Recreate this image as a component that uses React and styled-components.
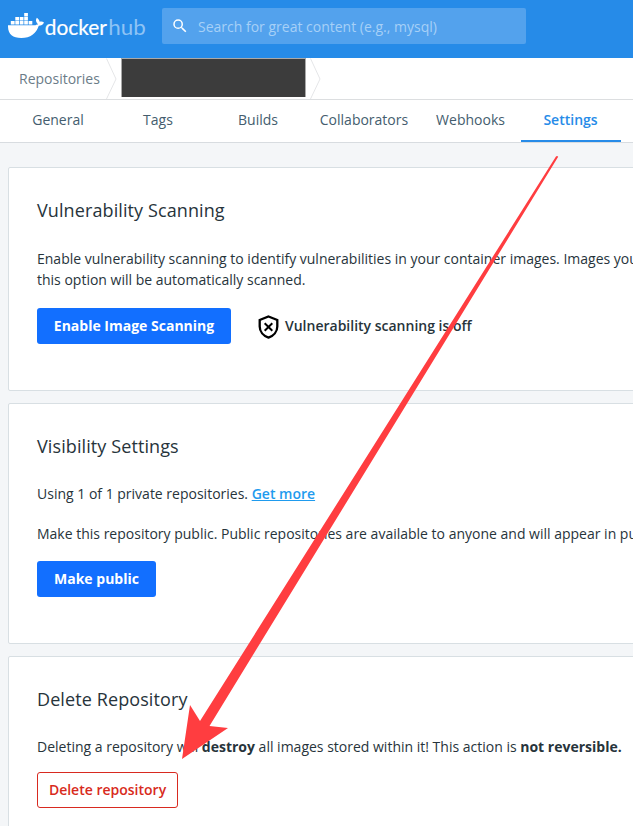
import styled, { createGlobalStyle } from 'styled-components';

const GlobalStyle = createGlobalStyle`
  * {
    box-sizing: border-box;
  }
  body {
    margin: 0;
    background-color: #f4f6f8;
    color: #27343b;
    font-family: 'Open Sans', 'Noto Sans', sans-serif;
    font-size: 14px;
    overflow: hidden;
  }
`;

const Page = styled.div`
  position: relative;
  width: 633px;
  height: 826px;
  overflow: hidden;
`;

const Header = styled.header`
  display: flex;
  align-items: flex-start;
  height: 58px;
  padding: 8px 0 0 8px;
  background-color: #268be8;
`;

const Logo = styled.svg`
  width: 142px;
  height: 34px;
  margin-right: 12px;
`;

const SearchBox = styled.div`
  display: flex;
  align-items: center;
  width: 364px;
  height: 36px;
  padding-left: 9px;
  border-radius: 2px;
  background-color: #53a2ed;
  color: #a6d0f7;
  svg {
    margin-right: 9px;
  }
`;

const Breadcrumb = styled.nav`
  display: flex;
  height: 42px;
  padding-left: 19px;
  border-bottom: 1px solid #dcdee0;
  background-color: white;
`;

const Crumb = styled.span`
  width: 87px;
  line-height: 42px;
  color: #6b7c88;
`;

const Chevron = styled.svg`
  width: 11px;
  height: 41px;
`;

// 이름이 가려진 저장소
const Redacted = styled.div`
  width: 185px;
  height: 39px;
  margin: 0 4px;
  border: 1px solid #a9a9a9;
  border-bottom: 0;
  background-color: #3c3c3c;
`;

const Tabs = styled.nav`
  display: flex;
  height: 43px;
  padding-left: 8px;
  border-bottom: 1px solid #d8dce0;
  background-color: white;
`;

const Tab = styled.a`
  width: ${(props) => props.$width || 100}px;
  padding-right: ${(props) => (props.$active ? 1 : 0)}px;
  line-height: 40px;
  text-align: center;
  color: ${(props) => (props.$active ? '#268be8' : '#445d6e')};
  font-weight: ${(props) => (props.$active ? 600 : 400)};
  border-bottom: 2px solid ${(props) => (props.$active ? '#268be8' : 'transparent')};
`;

const Main = styled.main`
  display: flex;
  flex-direction: column;
  gap: 12px;
  padding: 24px 0 0 8px;
`;

const Card = styled.section`
  flex-shrink: 0;
  width: 700px;
  height: ${(props) => props.$height}px;
  padding: 28px;
  border: 1px solid #d8dfe3;
  border-radius: 2px;
  background-color: white;
`;

const Title = styled.h2`
  margin: 0 0 ${(props) => props.$gap || 22}px;
  font-size: 18px;
  font-weight: 400;
  line-height: 29px;
  letter-spacing: 0.1px;
`;

const Text = styled.p`
  margin: 0 0 ${(props) => props.$gap}px;
  line-height: 21px;
  white-space: nowrap;
`;

const Link = styled.a`
  color: #1f9bee;
  font-weight: 600;
  text-decoration: underline;
`;

const Row = styled.div`
  display: flex;
  align-items: center;
`;

const Button = styled.button`
  display: block;
  width: ${(props) => props.$width}px;
  height: 36px;
  padding: 0 0 2px;
  border: 0;
  border-radius: 3px;
  background-color: #126fff;
  color: white;
  font: 700 14px 'Open Sans', sans-serif;
`;

const DangerButton = styled(Button)`
  border: 1px solid #d82a20;
  background-color: white;
  color: #d82a20;
  font-weight: 600;
`;

const Status = styled.div`
  display: flex;
  align-items: center;
  margin-left: 26px;
  font-weight: 600;
  svg {
    margin: 2px 5px 0 0;
  }
  span {
    padding-bottom: 2px;
  }
`;

const Arrow = styled.svg`
  position: absolute;
  top: 0;
  left: 0;
`;

const tabs = [
  { name: 'General' },
  { name: 'Tags' },
  { name: 'Builds' },
  { name: 'Collaborators', width: 112 },
  { name: 'Webhooks', width: 101 },
  { name: 'Settings', active: true },
];

function DockerLogo() {
  return (
    <Logo viewBox='0 0 142 34' fill='white'>
      <path d='M0 17.2H27.2C28.5 17.2 29.4 16.8 30 16.3C28 14.5 27.2 12 28.9 9.8C30.6 11 31.5 12.3 31.6 13.8C33.3 13.4 34.7 13.6 36 14.4C35 16.7 33.2 17.6 30.8 17.8C28.1 25.6 22.6 30 13.3 30C4.3 30-.3 26 0 17.2Z' />
      <path d='M16.2 5h3.7v3.5h-3.7zM7.3 9h3.8v3.4H7.3zM11.8 9h3.7v3.4h-3.7zM16.2 9h3.7v3.4h-3.7zM2.8 13h3.8v3.4H2.8zM7.3 13h3.8v3.4H7.3zM11.8 13h3.7v3.4h-3.7zM16.2 13h3.7v3.4h-3.7zM20.6 13h3.7v3.4h-3.7z' />
      <text x='36.8' y='27' fontFamily='Lato' fontSize='21' textLength='62' lengthAdjust='spacingAndGlyphs' stroke='white' strokeWidth='.2'>
        docker
      </text>
      <text x='100.3' y='27' fontFamily='Lato' fontSize='21' fill='#8ec3f5' textLength='37.5' lengthAdjust='spacingAndGlyphs'>
        hub
      </text>
    </Logo>
  );
}

function CrumbArrow() {
  return (
    <Chevron viewBox='0 0 11 41' fill='none' stroke='#e5e6e8'>
      <path d='M.5 .5L10 21L.5 41' />
    </Chevron>
  );
}

function App() {
  return (
    <Page>
      <GlobalStyle />
      <Header>
        <DockerLogo />
        <SearchBox>
          <svg width='18' height='18' viewBox='0 0 24 24' fill='white'>
            <path d='M15.5 14h-.79l-.28-.27A6.47 6.47 0 0 0 16 9.5 6.5 6.5 0 1 0 9.5 16c1.61 0 3.09-.59 4.23-1.57l.27.28v.79l5 4.99L20.49 19l-4.99-5zm-6 0a4.5 4.5 0 1 1 0-9 4.5 4.5 0 0 1 0 9z' />
          </svg>
          Search for great content (e.g., mysql)
        </SearchBox>
      </Header>
      <Breadcrumb>
        <Crumb>Repositories</Crumb>
        <CrumbArrow />
        <Redacted />
        <CrumbArrow />
      </Breadcrumb>
      <Tabs>
        {tabs.map((tab) => (
          <Tab key={tab.name} $width={tab.width} $active={tab.active}>
            {tab.name}
          </Tab>
        ))}
      </Tabs>
      <Main>
        <Card $height={224}>
          <Title $gap={23}>Vulnerability Scanning</Title>
          <Text $gap={18}>
            Enable vulnerability scanning to identify vulnerabilities in your container images. Images you
            <br />
            this option will be automatically scanned.
          </Text>
          <Row>
            <Button $width={194}>Enable Image Scanning</Button>
            <Status>
              <svg width='23' height='24' viewBox='0 0 23 24' fill='none' stroke='black'>
                <path d='M11.5 1.5L20.3 5V11.5C20.3 16.5 16.7 20.8 11.5 22.6C6.3 20.8 2.7 16.5 2.7 11.5V5Z' strokeWidth='2.3' />
                <path d='M7.7 8.2L15.3 15.8M15.3 8.2L7.7 15.8' strokeWidth='2' />
              </svg>
              <span>Vulnerability scanning is off</span>
            </Status>
          </Row>
        </Card>
        <Card $height={241}>
          <Title>Visibility Settings</Title>
          <Text $gap={19}>
            Using 1 of 1 private repositories. <Link>Get more</Link>
          </Text>
          <Text $gap={17}>
            Make this repository public. Public repositories are available to anyone and will appear in pu
          </Text>
          <Button $width={119}>Make public</Button>
        </Card>
        <Card $height={224}>
          <Title>Delete Repository</Title>
          <Text $gap={15}>
            Deleting a repository will <b>destroy</b> all images stored within it! This action is <b>not reversible.</b>
          </Text>
          <DangerButton $width={141}>Delete repository</DangerButton>
        </Card>
      </Main>
      <Arrow width='633' height='826'>
        <path d='M182 759L190 705L200 721L555.8 156.8Q557 155 558.2 156.8L209.5 726L228 728Z' fill='#ff3d40' />
      </Arrow>
    </Page>
  );
}

export default App;
